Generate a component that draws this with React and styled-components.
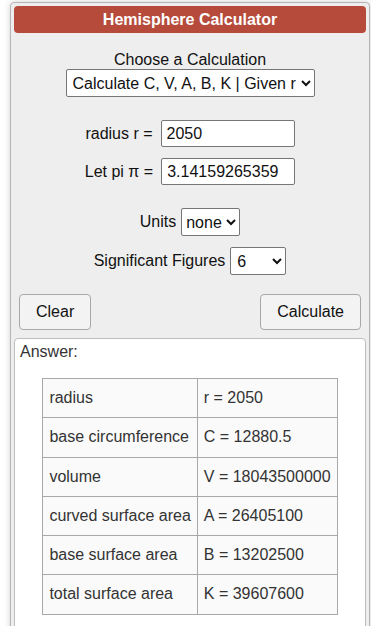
import React from "react";
import styled, { createGlobalStyle } from "styled-components";

const GlobalStyle = createGlobalStyle`
  body {
    margin: 0;
    background: #fff;
    font-family: "Liberation Sans", Arial, sans-serif;
    color: #111;
  }
`;

const results = [
  ["radius", "r = 2050"],
  ["base circumference", "C = 12880.5"],
  ["volume", "V = 18043500000"],
  ["curved surface area", "A = 26405100"],
  ["base surface area", "B = 13202500"],
  ["total surface area", "K = 39607600"],
];

export default function App() {
  return (
    <>
      <GlobalStyle />
      <Calculator>
        <Title>Hemisphere Calculator</Title>
        <Form>
          <Stack>
            <Label>Choose a Calculation</Label>
            <Select $width="249px" defaultValue="cvabk">
              <option value="cvabk">Calculate C, V, A, B, K | Given r</option>
            </Select>
          </Stack>

          <Fields>
            <Row>
              <Label>radius r =</Label>
              <Input defaultValue="2050" />
            </Row>
            <Row>
              <Label>Let pi π =</Label>
              <Input defaultValue="3.14159265359" />
            </Row>
          </Fields>

          <Fields>
            <Row $gap="5px">
              <Label>Units</Label>
              <Select $width="59px" $pad="0" defaultValue="none">
                <option value="none">none</option>
              </Select>
            </Row>
            <Row $gap="5px">
              <Label>Significant Figures</Label>
              <Select $width="56px" defaultValue="6">
                <option value="6">6</option>
              </Select>
            </Row>
          </Fields>

          <Buttons>
            <Button>Clear</Button>
            <Button>Calculate</Button>
          </Buttons>
        </Form>

        <Answer>
          <AnswerLabel>Answer:</AnswerLabel>
          <Results>
            <tbody>
              {results.map(([name, value]) => (
                <tr key={name}>
                  <Cell>{name}</Cell>
                  <Cell>{value}</Cell>
                </tr>
              ))}
            </tbody>
          </Results>
        </Answer>
      </Calculator>
    </>
  );
}

const Calculator = styled.div`
  margin: 2px 1px 0 10px;
  padding: 3px 3px 0;
  min-height: 640px;
  background: #eeeeee;
  border: 1px solid #b5b5b5;
  border-radius: 4px;
  box-shadow: 0 0 6px rgba(0, 0, 0, 0.18);
`;

const Title = styled.div`
  height: 27px;
  line-height: 27px;
  background: #b64b3b;
  border-radius: 4px;
  color: #fff;
  font-weight: bold;
  font-size: 16px;
  text-align: center;
`;

const Form = styled.div`
  display: flex;
  flex-direction: column;
  align-items: center;
  padding-top: 18px;
`;

const Stack = styled.div`
  display: flex;
  flex-direction: column;
  align-items: center;
`;

const Fields = styled.div`
  display: flex;
  flex-direction: column;
  align-items: center;
  gap: 11px;
  margin-top: 23px;
`;

const Row = styled.div`
  display: flex;
  align-items: center;
  gap: ${(p) => p.$gap || "8px"};
`;

const Label = styled.span`
  font-size: 16px;
  color: #111;
`;

const Select = styled.select`
  box-sizing: border-box;
  width: ${(p) => p.$width};
  height: 28px;
  padding: ${(p) => p.$pad || "0 2px"};
  font-family: "Liberation Sans", Arial, sans-serif;
  font-size: 16px;
  color: #111;
  background: #fff;
  border: 1px solid #767676;
  border-radius: 2px;
`;

const Input = styled.input`
  box-sizing: border-box;
  width: 134px;
  height: 27px;
  padding: 2px 5px;
  font-family: "Liberation Sans", Arial, sans-serif;
  font-size: 16px;
  color: #111;
  background: #fff;
  border: 1px solid #767676;
  border-radius: 2px;
`;

const Buttons = styled.div`
  align-self: stretch;
  display: flex;
  justify-content: space-between;
  padding: 0 5px;
  margin-top: 19px;
`;

const Button = styled.button`
  height: 36px;
  padding: 0 16px;
  font-family: "Liberation Sans", Arial, sans-serif;
  font-size: 16px;
  color: #111;
  background: #f3f3f3;
  border: 1px solid #a8a8a8;
  border-radius: 4px;
`;

const Answer = styled.div`
  margin-top: 8px;
  padding: 4px 5px 12px;
  background: #fff;
  border: 1px solid #bdbdbd;
  border-radius: 4px;
  min-height: 300px;
`;

const AnswerLabel = styled.div`
  font-size: 16px;
  color: #333;
`;

const Results = styled.table`
  margin: 17px auto 0;
  border-collapse: collapse;
  background: #fafafa;
`;

const Cell = styled.td`
  padding: 10px 6px;
  line-height: 18.3px;
  border: 1px solid #a8a8a8;
  font-size: 16px;
  color: #333;
  white-space: nowrap;
`;
